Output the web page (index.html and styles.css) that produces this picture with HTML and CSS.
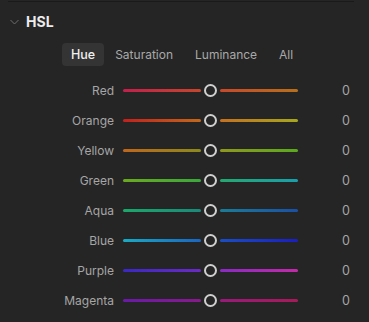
FILE: index.html
```html
<!DOCTYPE html>
<html>
<head>
<meta charset="utf-8">
<link rel="stylesheet" href="styles.css">
</head>
<body>
<div class="panel">
  <div class="divider"></div>
  <div class="header">
    <svg class="chev" width="9" height="6" viewBox="0 0 9 6"><path d="M0.5 1 L4.5 5 L8.5 1" fill="none" stroke="#6f6f6f" stroke-width="1"/></svg>
    <span class="title">HSL</span>
  </div>
  <div class="tabs">
    <span class="tab active">Hue</span>
    <span class="tab">Saturation</span>
    <span class="tab">Luminance</span>
    <span class="tab">All</span>
  </div>
  <div class="rows">
    <div class="row"><span class="label">Red</span><div class="slider"><span class="track" style="background:linear-gradient(90deg,#c31f4c,#c6462c)"></span><span class="thumb"></span><span class="track" style="background:linear-gradient(90deg,#c8482a,#b8701a)"></span></div><span class="val">0</span></div>
    <div class="row"><span class="label">Orange</span><div class="slider"><span class="track" style="background:linear-gradient(90deg,#c3201c,#c4681a)"></span><span class="thumb"></span><span class="track" style="background:linear-gradient(90deg,#c6701e,#a6a81c)"></span></div><span class="val">0</span></div>
    <div class="row"><span class="label">Yellow</span><div class="slider"><span class="track" style="background:linear-gradient(90deg,#c0661a,#8c8a1c)"></span><span class="thumb"></span><span class="track" style="background:linear-gradient(90deg,#8e981c,#5aaa1e)"></span></div><span class="val">0</span></div>
    <div class="row"><span class="label">Green</span><div class="slider"><span class="track" style="background:linear-gradient(90deg,#6aaa1e,#3aa83c)"></span><span class="thumb"></span><span class="track" style="background:linear-gradient(90deg,#24a870,#18a0ac)"></span></div><span class="val">0</span></div>
    <div class="row"><span class="label">Aqua</span><div class="slider"><span class="track" style="background:linear-gradient(90deg,#1aa86a,#1a8a7a)"></span><span class="thumb"></span><span class="track" style="background:linear-gradient(90deg,#1a7c98,#1a50a6)"></span></div><span class="val">0</span></div>
    <div class="row"><span class="label">Blue</span><div class="slider"><span class="track" style="background:linear-gradient(90deg,#18aac4,#1a66c2)"></span><span class="thumb"></span><span class="track" style="background:linear-gradient(90deg,#1a4ec4,#1a1ec2)"></span></div><span class="val">0</span></div>
    <div class="row"><span class="label">Purple</span><div class="slider"><span class="track" style="background:linear-gradient(90deg,#3a28c4,#6c2ac4)"></span><span class="thumb"></span><span class="track" style="background:linear-gradient(90deg,#8a2ac4,#c42aaa)"></span></div><span class="val">0</span></div>
    <div class="row"><span class="label">Magenta</span><div class="slider"><span class="track" style="background:linear-gradient(90deg,#6a1aa8,#881a8c)"></span><span class="thumb"></span><span class="track" style="background:linear-gradient(90deg,#981a7a,#a81a5a)"></span></div><span class="val">0</span></div>
  </div>
</div>
</body>
</html>
```
FILE: styles.css
```css
html, body {
  margin: 0;
  padding: 0;
  background: #252525;
}
body {
  width: 369px;
  height: 322px;
  overflow: hidden;
  font-family: Inter, "Noto Sans", sans-serif;
}
.divider {
  height: 1px;
  background: #1a1a1a;
  margin: 1px 15px 0 8px;
}
.header {
  display: flex;
  align-items: center;
  height: 38px;
  padding-left: 10px;
}
.chev {
  display: block;
  margin-right: 7px;
  margin-top: 1px;
}
.title {
  color: #ececec;
  font-weight: 700;
  font-size: 14px;
  letter-spacing: 0.1px;
}
.tabs {
  display: flex;
  align-items: center;
  height: 23px;
  margin-top: 3px;
  padding-left: 62px;
}
.tab {
  color: #a9a9a9;
  font-size: 12px;
  padding: 0 11px;
  line-height: 23px;
}
.tab.active {
  color: #f0f0f0;
  background: #343434;
  border-radius: 4px;
  padding: 0 9px;
  font-weight: 500;
  font-size: 12.5px;
}
.rows {
  margin-top: 9px;
}
.row {
  display: flex;
  align-items: center;
  height: 30px;
}
.label {
  width: 114px;
  text-align: right;
  color: #a6a6a6;
  font-size: 12px;
}
.slider {
  display: flex;
  align-items: center;
  margin-left: 9px;
}
.track {
  display: block;
  width: 78px;
  height: 3px;
  border-radius: 2px;
}
.thumb {
  display: block;
  box-sizing: border-box;
  width: 13px;
  height: 13px;
  border: 2px solid #cfcfcf;
  border-radius: 50%;
  margin: 0 3px 0 3px;
}
.val {
  width: 52px;
  text-align: right;
  color: #a6a6a6;
  font-size: 12.5px;
}
```
